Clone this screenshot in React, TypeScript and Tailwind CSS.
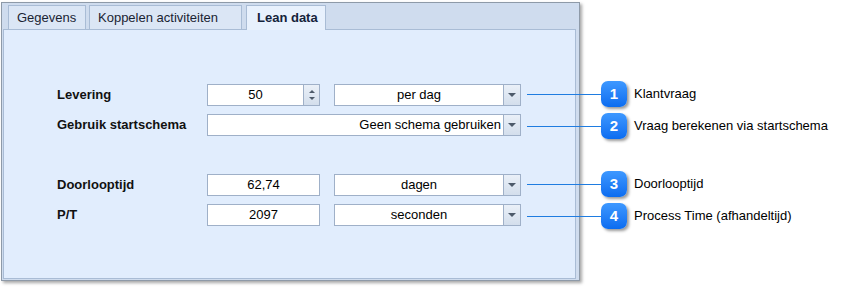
import React from "react";

const font = { fontFamily: '"Liberation Sans", Arial, sans-serif' };

function DropButton() {
  return (
    <div className="w-[17px] h-full flex items-center justify-center border-l border-[#9fb0c8] bg-gradient-to-b from-[#eaf0f8] to-[#d3deec]">
      <span className="block w-0 h-0 border-l-[4px] border-r-[4px] border-t-[4px] border-l-transparent border-r-transparent border-t-[#4d5a6a]" />
    </div>
  );
}

function Spinner() {
  return (
    <div className="w-[16px] h-full flex flex-col border-l border-[#9fb0c8] bg-gradient-to-b from-[#eaf0f8] to-[#d3deec]">
      <div className="flex-1 flex items-end justify-center pb-[2px]">
        <span className="block w-0 h-0 border-l-[3px] border-r-[3px] border-b-[3px] border-l-transparent border-r-transparent border-b-[#4d5a6a]" />
      </div>
      <div className="flex-1 flex items-start justify-center pt-[2px]">
        <span className="block w-0 h-0 border-l-[3px] border-r-[3px] border-t-[3px] border-l-transparent border-r-transparent border-t-[#4d5a6a]" />
      </div>
    </div>
  );
}

function NumberBox({ value, spin }: { value: string; spin?: boolean }) {
  return (
    <div className="w-[113px] h-[22px] flex border border-[#9fb0c8] bg-white">
      <div className="flex-1 flex items-center justify-center text-[13px] text-black">{value}</div>
      {spin && <Spinner />}
    </div>
  );
}

function Combo({ value, wide, right }: { value: string; wide?: boolean; right?: boolean }) {
  return (
    <div className={(wide ? "w-[314px]" : "w-[187px]") + " h-[22px] flex border border-[#9fb0c8] bg-white"}>
      <div className={"flex-1 flex items-center text-[13px] text-black " + (right ? "justify-end pr-[2px]" : "justify-center")}>
        {value}
      </div>
      <DropButton />
    </div>
  );
}

function Row({ label, children }: { label: string; children: React.ReactNode }) {
  return (
    <div className="flex items-center h-[22px]">
      <div className="w-[150px] text-[13px] font-bold text-[#111]">{label}</div>
      <div className="flex gap-[14px]">{children}</div>
    </div>
  );
}

const callouts = [
  { n: "1", text: "Klantvraag", y: 94 },
  { n: "2", text: "Vraag berekenen via startschema", y: 126 },
  { n: "3", text: "Doorlooptijd", y: 184 },
  { n: "4", text: "Process Time (afhandeltijd)", y: 216 },
];

export default function App() {
  return (
    <div className="relative w-[844px] h-[288px] bg-white" style={font}>
      <div className="pt-[2px] pl-[1px]">
        <div className="w-[579px] h-[279px] flex flex-col border border-[#8e9aa8] bg-[#cfdcee] pl-[1px] pr-[3px] pb-[1px] shadow-[2px_2px_3px_rgba(0,0,0,0.35)]">
          {/* Tabs */}
          <div className="h-[26px] flex items-end gap-[3px] pl-[5px] relative z-10">
            <div className="h-[24px] w-[78px] flex items-center pl-[8px] border border-b-0 border-[#a9bcd5] bg-[#dbe6f5] text-[13px] text-[#1a2433]">
              Gegevens
            </div>
            <div className="h-[24px] w-[153px] flex items-center pl-[8px] border border-b-0 border-[#a9bcd5] bg-[#dbe6f5] text-[13px] text-[#1a2433]">
              Koppelen activiteiten
            </div>
            <div className="h-[25px] w-[80px] ml-px -mb-px flex items-center pl-[10px] border border-b-0 border-[#a9bcd5] bg-[#e8f1fd] text-[13px] font-bold text-[#15233b]">
              Lean data
            </div>
          </div>

          {/* Panel */}
          <div className="flex-1 border border-[#a9bcd5] bg-[#e1edfd] pl-[53px] pt-[54px] flex flex-col">
            <div className="flex flex-col gap-[8px]">
              <Row label="Levering">
                <NumberBox value="50" spin />
                <Combo value="per dag" />
              </Row>
              <div className="flex items-center h-[22px]">
                <div className="w-[150px] text-[13px] font-bold text-[#111]">Gebruik startschema</div>
                <Combo value="Geen schema gebruiken" wide right />
              </div>
            </div>
            <div className="flex flex-col gap-[8px] mt-[38px]">
              <Row label="Doorlooptijd">
                <NumberBox value="62,74" />
                <Combo value="dagen" />
              </Row>
              <Row label="P/T">
                <NumberBox value="2097" />
                <Combo value="seconden" />
              </Row>
            </div>
          </div>
        </div>
      </div>

      {/* Callouts */}
      {callouts.map((c) => (
        <div key={c.n} className="absolute left-[527px] flex items-center h-[26px]" style={{ top: c.y - 13 }}>
          <div className="w-[74px] h-px bg-[#1f7ce0]" />
          <div className="w-[26px] h-[26px] rounded-[7px] bg-gradient-to-b from-[#3d98ff] to-[#0a6cf0] shadow-[2px_2px_3px_rgba(0,0,0,0.4)] flex items-center justify-center text-white font-bold text-[15px]">
            {c.n}
          </div>
          <div className="ml-[7px] text-[13px] text-black whitespace-nowrap">{c.text}</div>
        </div>
      ))}
    </div>
  );
}
